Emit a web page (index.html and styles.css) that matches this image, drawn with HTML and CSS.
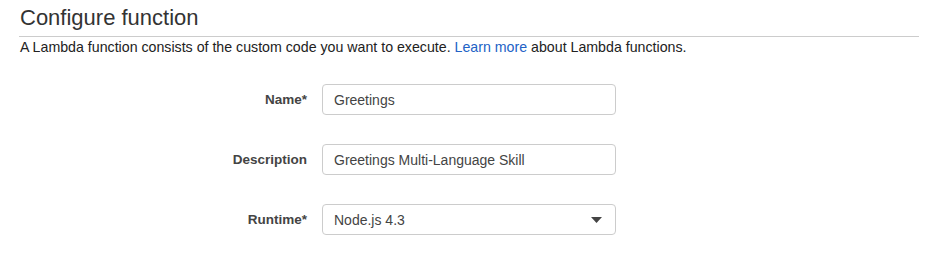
FILE: index.html
```html
<!DOCTYPE html>
<html>
<head>
    <meta charset="utf-8">
    <title>Configure function</title>
    <link rel="stylesheet" href="styles.css">
</head>
<body>
    <div class="page">
        <h2 class="title">Configure function</h2>
        <p class="intro">A Lambda function consists of the custom code you want to execute. <a href="#">Learn more</a> about Lambda functions.</p>

        <form class="fields">
            <div class="row">
                <label class="lbl" for="fn-name">Name*</label>
                <input class="box" id="fn-name" type="text" value="Greetings">
            </div>
            <div class="row">
                <label class="lbl" for="fn-desc">Description</label>
                <input class="box" id="fn-desc" type="text" value="Greetings Multi-Language Skill">
            </div>
            <div class="row">
                <label class="lbl" for="fn-runtime">Runtime*</label>
                <div class="box sel">
                    <span>Node.js 4.3</span>
                    <svg class="caret" width="11" height="6" viewBox="0 0 11 6"><path d="M0 0H11L5.5 6Z" fill="#444"/></svg>
                </div>
            </div>
        </form>
    </div>
</body>
</html>
```

FILE: styles.css
```css
body {
    margin: 0;
    padding: 0;
    background: #fff;
    font-family: "Liberation Sans", Arial, sans-serif;
    color: #333;
}

.page {
    padding: 5px 14px 0 19px;
}

.title {
    margin: 0;
    padding: 0 0 5px 1px;
    font-size: 22px;
    font-weight: normal;
    line-height: 26px;
    color: #333;
    border-bottom: 1px solid #ccc;
}

.intro {
    margin: 2px 0 0 1px;
    font-size: 14.2px;
    line-height: 17px;
    color: #222;
}

.intro a {
    color: #2262c6;
    text-decoration: none;
}

.fields {
    display: flex;
    flex-direction: column;
    gap: 29px;
    margin-top: 28px;
}

.row {
    display: flex;
    align-items: center;
    gap: 15px;
}

.lbl {
    width: 288px;
    text-align: right;
    font-size: 13.5px;
    font-weight: bold;
    color: #444;
}

.box {
    box-sizing: border-box;
    width: 294px;
    height: 31px;
    margin: 0;
    padding: 0 11px;
    border: 1px solid #ccc;
    border-radius: 4px;
    background: #fff;
    font-family: inherit;
    font-size: 14px;
    color: #444;
    outline: none;
}

.sel {
    display: flex;
    align-items: center;
    justify-content: space-between;
    padding-right: 13px;
}
```
